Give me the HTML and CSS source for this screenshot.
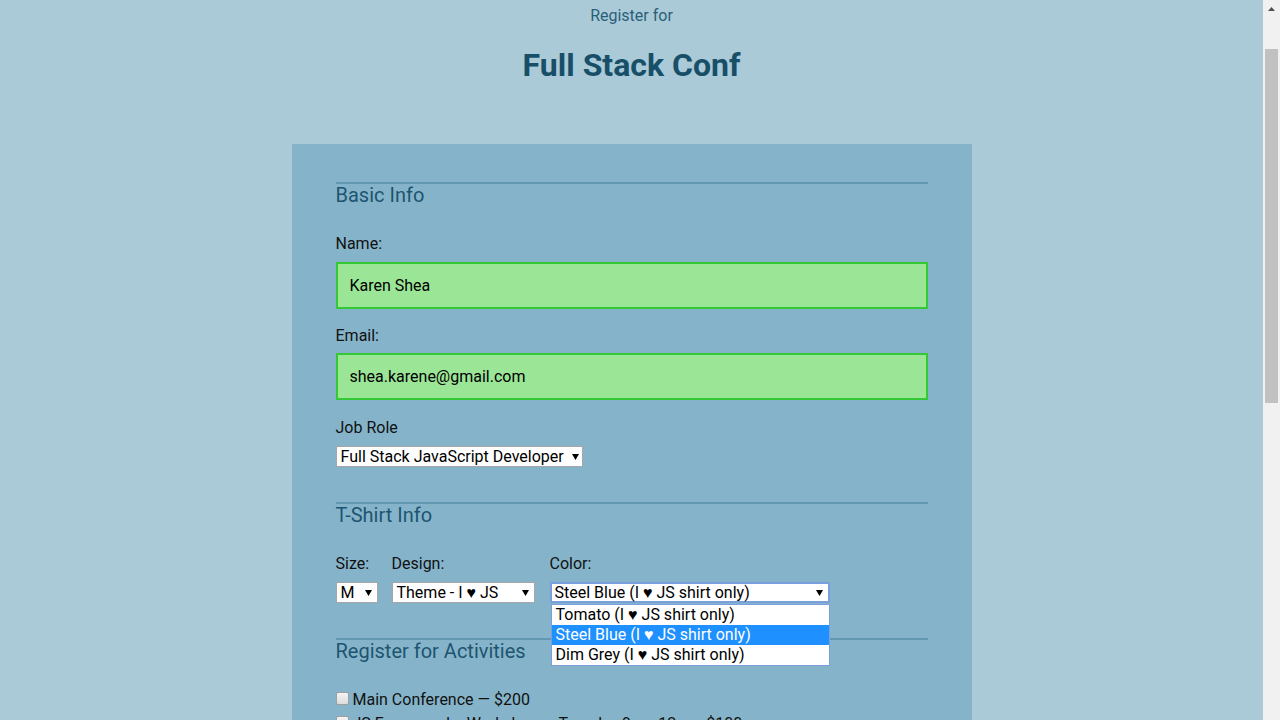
FILE: index.html
```
<!DOCTYPE html>
<html lang="en">
<head>
<meta charset="utf-8">
<title>Full Stack Conf</title>
<link rel="stylesheet" href="styles.css">
</head>
<body>
<header class="header">
  <p class="pre">Register for</p>
  <h1 class="title">Full Stack Conf</h1>
</header>
<main class="form">
  <section class="section">
    <h2 class="legend">Basic Info</h2>
    <label class="label first">Name:</label>
    <div class="input">Karen Shea</div>
    <label class="label email">Email:</label>
    <div class="input">shea.karene@gmail.com</div>
    <label class="label">Job Role</label>
    <div class="select job"><span>Full Stack JavaScript Developer</span><svg class="arrow" width="7" height="7" viewBox="0 0 7 7"><polygon points="0,1 7,1 3.5,7" fill="#000"/></svg></div>
  </section>
  <section class="section">
    <h2 class="legend">T-Shirt Info</h2>
    <div class="shirt">
      <div class="col">
        <label class="label first">Size:</label>
        <div class="select size"><span>M</span><svg class="arrow" width="7" height="7" viewBox="0 0 7 7"><polygon points="0,1 7,1 3.5,7" fill="#000"/></svg></div>
      </div>
      <div class="col">
        <label class="label first">Design:</label>
        <div class="select design"><span>Theme - I ♥ JS</span><svg class="arrow" width="7" height="7" viewBox="0 0 7 7"><polygon points="0,1 7,1 3.5,7" fill="#000"/></svg></div>
      </div>
      <div class="col colorcol">
        <label class="label first">Color:</label>
        <div class="select color focus"><span>Steel Blue (I ♥ JS shirt only)</span><svg class="arrow" width="7" height="7" viewBox="0 0 7 7"><polygon points="0,1 7,1 3.5,7" fill="#000"/></svg></div>
        <ul class="dropdown">
          <li class="opt">Tomato (I ♥ JS shirt only)</li>
          <li class="opt sel">Steel Blue (I ♥ JS shirt only)</li>
          <li class="opt">Dim Grey (I ♥ JS shirt only)</li>
        </ul>
      </div>
    </div>
  </section>
  <section class="section">
    <h2 class="legend">Register for Activities</h2>
    <div class="acts">
      <label class="act"><span class="box"></span>Main Conference — $200</label>
      <label class="act"><span class="box"></span>JS Frameworks Workshop — Tuesday 9am-12pm, $100</label>
      <label class="act"><span class="box"></span>JavaScript Libraries Workshop — Tuesday 1pm-4pm, $100</label>
      <label class="act"><span class="box"></span>Express Workshop — Tuesday 9am-12pm, $100</label>
      <label class="act"><span class="box"></span>Node.js Workshop — Tuesday 1pm-4pm, $100</label>
    </div>
  </section>
</main>
<div class="scrollbar">
  <svg class="sb-arrow" width="7" height="4" viewBox="0 0 7 4"><polygon points="3.5,0 7,4 0,4" fill="#505050"/></svg>
  <div class="sb-thumb"></div>
</div>
</body>
</html>
```
FILE: styles.css
```
* { box-sizing: border-box; }
html { overflow: hidden; }
html, body { margin: 0; padding: 0; }
body {
  background: #aacad8;
  font-family: Roboto, "Noto Sans", sans-serif;
  color: #000;
  padding-right: 17px;
  padding-bottom: 60px;
}
.header {
  text-align: center;
  padding-top: 6px;
  color: #184f68;
}
.pre {
  margin: 0;
  font-size: 16px;
  line-height: 20px;
  color: #2b5f78;
}
.title {
  margin: 19px 0 0;
  font-size: 32px;
  line-height: 40px;
  font-weight: 700;
  color: #184f68;
}
.form {
  width: 680px;
  margin: 59px auto 0;
  background: #85b4ca;
  padding: 38px 44px 40px;
}
.section {
  border-top: 2px solid #6497b0;
  padding-bottom: 35px;
  display: flex;
  flex-direction: column;
  align-items: flex-start;
}
.legend {
  margin: 0;
  font-size: 20px;
  line-height: 23px;
  font-weight: 400;
  color: #1e5470;
}
.label {
  display: block;
  font-size: 16px;
  line-height: 20px;
  margin-top: 18px;
  margin-bottom: 8px;
  color: #111;
}
.label.first { margin-top: 27px; }
.label.email { margin-top: 17px; margin-bottom: 7px; }
.input {
  width: 100%;
  height: 47px;
  background: #9be696;
  border: 2px solid #34c934;
  padding: 0 12px;
  display: flex;
  align-items: center;
  font-size: 16px;
  color: #000;
}
.select {
  height: 21px;
  background: #fff;
  border: 1px solid #a6a6a6;
  display: flex;
  align-items: center;
  justify-content: space-between;
  padding: 0 5px 0 4px;
  font-size: 16px;
  line-height: 19px;
  white-space: nowrap;
}
.arrow { flex: none; margin-left: 8px; margin-top: -1px; }
.job { width: 247px; }
.size { width: 42px; }
.design { width: 143px; }
.color { width: 280px; }
.focus { border: 2px solid #7b9fdc; padding-left: 3px; padding-right: 5px; }
.shirt {
  display: flex;
  gap: 14px;
}
.colorcol { position: relative; margin-left: 1px; }
.dropdown {
  position: absolute;
  top: 77px;
  left: 1px;
  width: 279px;
  margin: 0;
  padding: 0;
  list-style: none;
  background: #fff;
  border: 1px solid #7b9fdc;
  z-index: 5;
}
.opt {
  height: 20px;
  line-height: 20px;
  padding-left: 4px;
  font-size: 16px;
  white-space: nowrap;
}
.opt.sel { background: #1e90ff; color: #fff; }
.acts {
  margin-top: 27px;
  display: flex;
  flex-direction: column;
  gap: 4px;
}
.act {
  display: flex;
  align-items: center;
  font-size: 16px;
  line-height: 20px;
  color: #111;
}
.box {
  width: 13px;
  height: 13px;
  margin-right: 4px;
  margin-top: -3px;
  border: 1px solid #a0a0a0;
  border-radius: 2px;
  background: linear-gradient(#f4f4f4, #dcdcdc);
}
.scrollbar {
  position: fixed;
  top: 0;
  right: 0;
  width: 17px;
  height: 100vh;
  background: #f1f1f1;
}
.sb-arrow {
  position: absolute;
  top: 7px;
  left: 5px;
}
.sb-thumb {
  position: absolute;
  top: 49px;
  left: 2px;
  width: 13px;
  height: 354px;
  background: #c1c1c1;
}
```
